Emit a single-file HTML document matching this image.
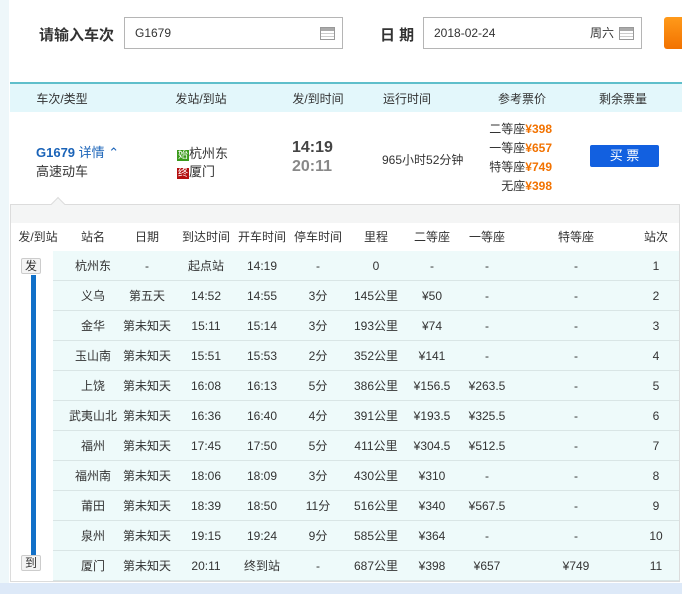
<!DOCTYPE html>
<html><head><meta charset="utf-8"><style>
*{margin:0;padding:0;box-sizing:border-box}
body{width:682px;height:594px;overflow:hidden;background:#fff;font-family:"Liberation Sans","Noto Sans CJK SC",sans-serif;font-size:12px;color:#333;position:relative}
.a{position:absolute}
.lbl{font-size:15px;color:#333;font-weight:bold;letter-spacing:0}
.inp{border:1px solid #b5b5b5;height:32px;background:#fff;font-size:12px;color:#333;line-height:30px;padding-left:10px}
.cal{position:absolute;top:9px;width:15px;height:13px;border:1px solid #999;background:repeating-linear-gradient(#fff 0 2px,#ccc 2px 3px)}
.cal:before{content:"";position:absolute;left:0;right:0;top:0;height:3px;background:#aaa}
.hd{left:10px;top:82px;width:672px;height:30px;background:#e3f7fb;border-top:2px solid #5fbfcb;font-size:12px;color:#333}
.hd span,.c{position:absolute;transform:translateX(-50%);white-space:nowrap}
.o{color:#f27200;font-weight:bold}
.panel{left:10px;top:204px;width:670px;height:378px;background:#f4f5f5;border:1px solid #dcdcdc}
.th{top:223px;height:28px;left:11px;width:668px;background:#fff;line-height:28px;color:#333}
.row{left:53px;width:626px;height:30px;background:#eefafa;border-bottom:1px solid #d9e5e5;line-height:30px}
.row span{position:absolute;transform:translateX(-50%);white-space:nowrap}
.tag{left:21px;width:20px;height:16px;border:1px solid #ccc;background:#f4f4f4;font-size:12px;line-height:14px;text-align:center;border-radius:2px}
</style></head><body>
<div class="a" style="left:0;top:0;width:9px;height:594px;background:#eef7fa"></div>
<div class="a lbl" style="left:39px;top:24px">请输入车次</div>
<div class="a inp" style="left:124px;top:17px;width:219px">G1679<div class="cal" style="left:195px"></div></div>
<div class="a lbl" style="left:380px;top:24px">日 期</div>
<div class="a inp" style="left:423px;top:17px;width:219px">2018-02-24<span class="a" style="left:166px;top:0">周六</span><div class="cal" style="left:195px"></div></div>
<div class="a" style="left:664px;top:17px;width:18px;height:32px;background:linear-gradient(#ff9a1a,#f27200);border-radius:3px 0 0 3px"></div>
<div class="a hd"><span style="left:52px;top:6px">车次/类型</span><span style="left:191px;top:6px">发站/到站</span><span style="left:308px;top:6px">发/到时间</span><span style="left:397px;top:6px">运行时间</span><span style="left:512px;top:6px">参考票价</span><span style="left:613px;top:6px">剩余票量</span></div>
<div class="a" style="left:36px;top:142px;color:#1a63b8;font-weight:bold;font-size:13px">G1679 <span style="font-weight:normal">详情 ⌃</span></div>
<div class="a" style="left:36px;top:161px;font-size:13px">高速动车</div>
<div class="a" style="left:177px;top:143px;font-size:13px"><span style="background:#3a9a1a;color:#fff;font-size:10px;padding:0 1px">始</span>杭州东</div>
<div class="a" style="left:177px;top:161px;font-size:13px"><span style="background:#b51010;color:#fff;font-size:10px;padding:0 1px">终</span>厦门</div>
<div class="a" style="left:292px;top:139px;font-size:16px;font-weight:bold;color:#444">14:19</div>
<div class="a" style="left:292px;top:158px;font-size:16px;font-weight:bold;color:#888">20:11</div>
<div class="a" style="left:382px;top:151px;font-size:12px">965小时52分钟</div>
<div class="a" style="left:476px;top:120px;font-size:12px;text-align:right;width:76px;line-height:19px">二等座<span class="o">¥398</span><br>一等座<span class="o">¥657</span><br>特等座<span class="o">¥749</span><br>无座<span class="o">¥398</span></div>
<div class="a" style="left:590px;top:145px;width:69px;height:22px;background:#1260e0;color:#fff;text-align:center;line-height:22px;font-size:13px;border-radius:2px">买 票</div>
<div class="a panel"></div>
<div class="a" style="left:53px;top:199px;width:10px;height:10px;background:#f4f5f5;border-left:1px solid #dcdcdc;border-top:1px solid #dcdcdc;transform:rotate(45deg)"></div>
<div class="a th"><span class="c" style="left:27px">发/到站</span><span class="c" style="left:82px">站名</span><span class="c" style="left:136px">日期</span><span class="c" style="left:195px">到达时间</span><span class="c" style="left:251px">开车时间</span><span class="c" style="left:307px">停车时间</span><span class="c" style="left:365px">里程</span><span class="c" style="left:421px">二等座</span><span class="c" style="left:476px">一等座</span><span class="c" style="left:565px">特等座</span><span class="c" style="left:645px">站次</span></div>
<div class="a" style="left:11px;top:251px;width:42px;height:330px;background:#fff"></div>
<div class="a" style="left:31px;top:275px;width:5px;height:280px;background:#1170c8"></div>
<div class="a tag" style="top:258px">发</div>
<div class="a tag" style="top:555px">到</div>
<div id="rows"></div>
<div class="a" style="left:0;top:583px;width:682px;height:11px;background:#dde9f8"></div>
<script>
var d=[["杭州东","-","起点站","14:19","-","0","-","-","-","1"],["义乌","第五天","14:52","14:55","3分","145公里","¥50","-","-","2"],["金华","第未知天","15:11","15:14","3分","193公里","¥74","-","-","3"],["玉山南","第未知天","15:51","15:53","2分","352公里","¥141","-","-","4"],["上饶","第未知天","16:08","16:13","5分","386公里","¥156.5","¥263.5","-","5"],["武夷山北","第未知天","16:36","16:40","4分","391公里","¥193.5","¥325.5","-","6"],["福州","第未知天","17:45","17:50","5分","411公里","¥304.5","¥512.5","-","7"],["福州南","第未知天","18:06","18:09","3分","430公里","¥310","-","-","8"],["莆田","第未知天","18:39","18:50","11分","516公里","¥340","¥567.5","-","9"],["泉州","第未知天","19:15","19:24","9分","585公里","¥364","-","-","10"],["厦门","第未知天","20:11","终到站","-","687公里","¥398","¥657","¥749","11"]];
var x=[93,147,206,262,318,376,432,487,576,656],h="";
d.forEach(function(r,i){h+='<div class="a row" style="top:'+(251+i*30)+'px">';r.forEach(function(t,j){h+='<span style="left:'+(x[j]-53)+'px">'+t+'</span>'});h+='</div>'});
document.getElementById("rows").outerHTML=h;
</script>
</body></html>
